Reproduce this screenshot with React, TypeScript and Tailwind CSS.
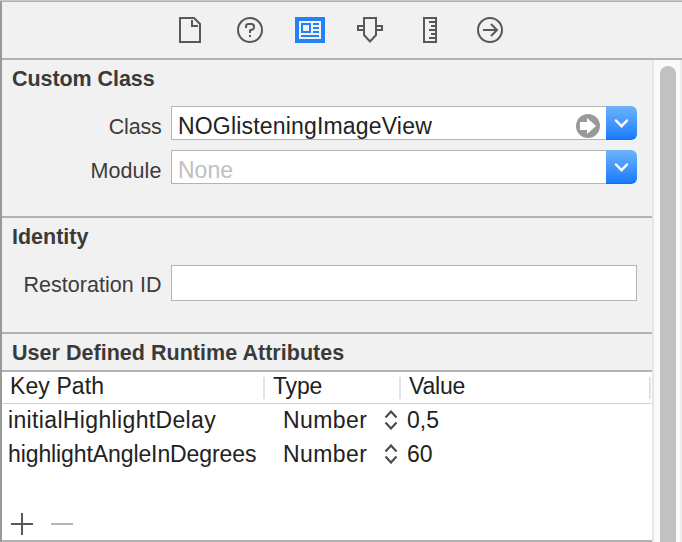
import type { ReactNode } from "react";

function Toolbar() {
  return (
    <header className="flex h-[56px] shrink-0 items-start gap-[30px] pl-[173px] pt-[13px]">
      <svg className="h-[30px] w-[30px]" viewBox="0 0 30 30" fill="none" stroke="#585858" strokeWidth="2">
        <path d="M5 3H19L25 9V27H5Z" />
        <path d="M17 5V11H23" />
      </svg>
      <svg className="h-[30px] w-[30px]" viewBox="0 0 30 30" fill="none" stroke="#585858" strokeWidth="2">
        <circle cx="15" cy="15" r="12" />
        <path d="M11 13V11.5Q11 9 13.5 9H16.5Q19 9 19 11.5V12.5Q19 14 17.5 14.5L15 15.5V18M15 20V22" />
      </svg>
      <svg className="h-[30px] w-[30px]" viewBox="0 0 30 30" fill="none">
        <path fill="#2083fb" d="M0 2H30V28H0Z" />
        <path fill="#f2f2f2" d="M4 6H26V24H4Z" />
        <path stroke="#2083fb" strokeWidth="2" d="M7 9H15V17H7ZM18 9H24M18 13H24M18 17H24M6 21H24" />
      </svg>
      <svg className="h-[30px] w-[30px]" viewBox="0 0 30 30" fill="none" stroke="#585858" strokeWidth="2">
        <path d="M9 3H21V20L15 26.5L9 20ZM9 11H3V15H9M21 11H27V15H21" />
      </svg>
      <svg className="h-[30px] w-[30px]" viewBox="0 0 30 30" fill="none" stroke="#585858" strokeWidth="2">
        <path d="M9 3H21V27H9ZM14 7H20M16 11H20M14 15H20M16 19H20M14 23H20" />
      </svg>
      <svg className="h-[30px] w-[30px]" viewBox="0 0 30 30" fill="none" stroke="#585858" strokeWidth="2">
        <circle cx="15" cy="15" r="12" />
        <path d="M8 15H21.5M16 9L22 15L16 21" />
      </svg>
    </header>
  );
}

function Label({ children, className }: { children: ReactNode; className: string }) {
  return (
    <span
      className={
        "w-[159.5px] shrink-0 whitespace-nowrap text-right text-[21.5px] leading-[24px] text-[#3c3c3c] " + className
      }
    >
      {children}
    </span>
  );
}

function DropButton() {
  return (
    <span className="flex h-[34px] w-[31px] shrink-0 items-center justify-center rounded-r-[6px] border-b border-[#1a6fe8] bg-linear-to-b from-[#6cb3fa] to-[#147bfd]">
      <svg className="h-[34px] w-[31px]" viewBox="0 0 31 34" fill="none" stroke="white" strokeWidth="2.5">
        <path d="M10 14.5L15.5 20.2L21 14.5" strokeLinecap="round" />
      </svg>
    </span>
  );
}

function Stepper() {
  return (
    <svg className="h-[20px] w-[14px]" viewBox="0 0 14 20" fill="none" stroke="#4c4c4c" strokeWidth="2.2">
      <path d="M1.5 7.5L7 1.5L12.5 7.5M1.5 12.5L7 18.5L12.5 12.5" />
    </svg>
  );
}

function Row({ name, value, tracking }: { name: string; value: string; tracking: string }) {
  return (
    <div className="flex h-[34px] items-center pb-[2px] text-[23px] leading-[32px] text-[#222]">
      <span className={"w-[275px] pl-[6px] " + tracking}>{name}</span>
      <span className="w-[107px] pl-[6px] tracking-[0.4px]">Number</span>
      <Stepper />
      <span className="pl-[9px]">{value}</span>
    </div>
  );
}

const headingClass = "pl-[10px] text-[21.5px] leading-[24px] font-bold text-[#3a3a3a] whitespace-nowrap";

export default function App() {
  return (
    <div className="h-[542px] w-[682px] overflow-hidden border-t border-[#c8c8c8] bg-[#f1f1f1] font-['Liberation_Sans',sans-serif]">
      <div className="flex h-[541px] flex-col border-l-2 border-t border-l-[#999] border-t-[#b0b0b0]">
        <Toolbar />
        <div className="flex h-[484px] border-t-2 border-[#b2b2b2]">
          <main className="w-[650px] shrink-0">
            <section className="h-[156px] pt-[7px]">
              <h2 className={headingClass + " tracking-[-0.06px]"}>Custom Class</h2>
              <div className="mt-[15px] flex h-[34px] items-center">
                <Label className="pt-[7px] tracking-[-0.2px]">Class</Label>
                <div className="ml-[9.5px] flex h-[34px] w-[435px] items-center border border-r-0 border-[#b4b4b4] bg-white pl-[6px]">
                  <span className="pt-[6px] text-[23px] leading-[28px] tracking-[0.18px] text-[#222]">NOGlisteningImageView</span>
                  <svg className="ml-auto mr-[6px] mt-[6px] h-[24px] w-[24px] shrink-0" viewBox="0 0 24 24">
                    <circle cx="12" cy="12" r="12" fill="#999" />
                    <path fill="white" d="M4 8H11V4L20 12L11 20V16H4Z" />
                  </svg>
                </div>
                <DropButton />
              </div>
              <div className="mt-[10px] flex h-[34px] items-center">
                <Label className="pt-[7px] tracking-[0.1px]">Module</Label>
                <div className="ml-[9.5px] flex h-[34px] w-[435px] items-center border border-r-0 border-[#b4b4b4] bg-white pl-[6px]">
                  <span className="pt-[6px] text-[23px] leading-[28px] text-[#bfbfbf]">None</span>
                </div>
                <DropButton />
              </div>
            </section>
            <section className="h-[116px] border-t-2 border-[#b2b2b2] pt-[7px]">
              <h2 className={headingClass}>Identity</h2>
              <div className="mt-[16px] flex h-[36px] items-center">
                <Label className="pt-[3px] tracking-[0.05px]">Restoration ID</Label>
                <div className="ml-[9.5px] h-[36px] w-[466px] border border-[#b4b4b4] bg-white" />
              </div>
            </section>
            <section className="border-t-2 border-[#b2b2b2]">
              <h2 className={headingClass + " h-[36px] pt-[7px] tracking-[0.03px]"}>User Defined Runtime Attributes</h2>
              <div className="h-[172px] border-y-2 border-[#b2b2b2] bg-white">
                <div className="flex h-[32px] items-center border-b border-[#d2d2d2] text-[23px] leading-[24px] text-[#222]">
                  <span className="h-[28px] w-[261px] pl-[8px] tracking-[0.1px]">Key Path</span>
                  <i className="h-[22px] w-[2px] bg-[#e3e3e3]" />
                  <span className="h-[28px] w-[134px] pl-[8px] tracking-[-0.2px]">Type</span>
                  <i className="h-[22px] w-[2px] bg-[#e3e3e3]" />
                  <span className="h-[28px] w-[248px] pl-[8px] tracking-[-0.2px]">Value</span>
                  <i className="h-[22px] w-[2px] bg-[#e3e3e3]" />
                </div>
                <Row name="initialHighlightDelay" value="0,5" tracking="tracking-[0.35px]" />
                <Row name="highlightAngleInDegrees" value="60" tracking="tracking-[-0.1px]" />
                <div className="flex items-center gap-[18px] pl-[9px] pt-[41px]">
                  <svg className="h-[22px] w-[22px]" viewBox="0 0 22 22" stroke="#585858" strokeWidth="2">
                    <path d="M0 11H22M11 0V22" />
                  </svg>
                  <i className="h-[2px] w-[22px] bg-[#b5b5b5]" />
                </div>
              </div>
            </section>
          </main>
          <aside className="h-[484px] w-[30px] border-x-2 border-l-[#e6e6e6] border-r-[#ececec] bg-[#fafafa] pl-[6px] pt-[6px]">
            <div className="h-[490px] w-[16px] rounded-t-[8px] bg-[#c1c1c1]" />
          </aside>
        </div>
      </div>
    </div>
  );
}
